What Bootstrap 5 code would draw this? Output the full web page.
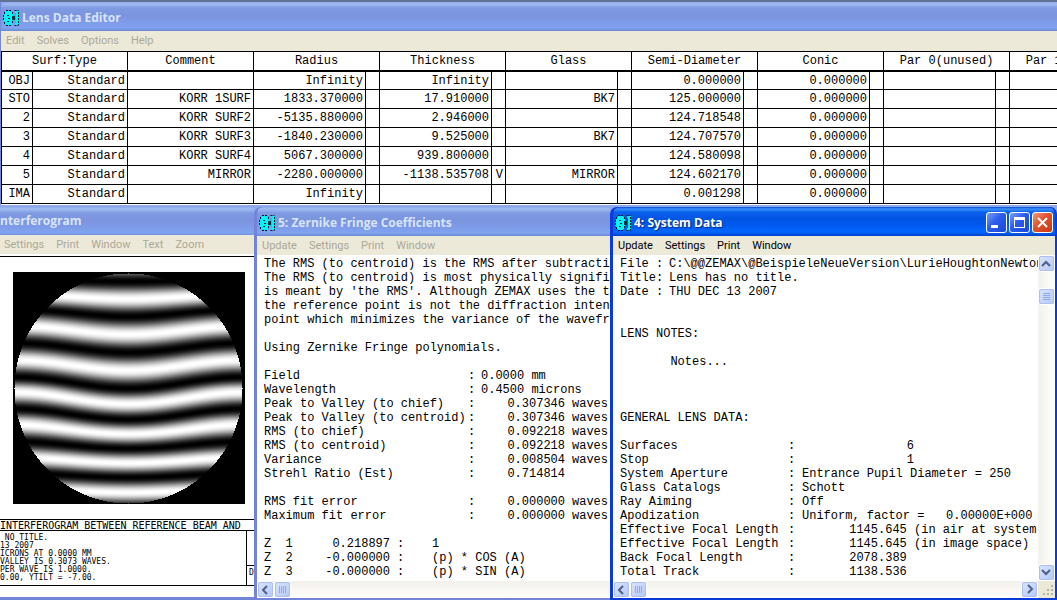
<!DOCTYPE html>
<html lang="en">
<head>
<meta charset="utf-8">
<meta name="viewport" content="width=device-width, initial-scale=1">
<title>Lens Data Editor</title>
<link href="https://cdn.jsdelivr.net/npm/bootstrap@5.3.0/dist/css/bootstrap.min.css" rel="stylesheet">
<style>
  body { background: #8fa9ec; font-family: "Open Sans", sans-serif; color: #000; }
  .desk-edge { height: 2px; background: #5f7396; }
  .frames { display: grid; grid-template-columns: minmax(0, 254fr) minmax(0, 356fr) minmax(0, 447fr); padding-top: 2px; }

  .titlebar { height: 29px; padding: 2px 4px 0 5px; gap: 3px; border-radius: 7px 7px 0 0; color: #d8e4f8;
    background: linear-gradient(#8ea9e8 0, #a2bcf2 2px, #7f9be2 6px, #7b94de 13px, #7e99e6 19px, #80a4f0 26px, #6d87d0 29px); }
  .titlebar h1, .titlebar h2 { margin: 0; font: 700 12px/16px "Open Sans", sans-serif; white-space: nowrap; }
  .active .titlebar { color: #fff; text-shadow: 1px 1px 1px #0a2a80; padding-right: 2px;
    background: linear-gradient(#0646c8 0, #3f93ff 2px, #0a62ec 5px, #0054e2 12px, #0059ee 18px, #0468ff 25px, #0040c8 29px); }
  .menu { background: #ece9d8; height: 20px; gap: 12px; padding-left: 5px; }
  .menu button { border: 0; padding: 0; background: none; color: #aca899; font: 11px/18px Roboto, sans-serif; }
  .active .menu button { color: #000; }
  .frames .menu { height: 19px; }

  .win { min-height: 0; background: #fff; }
  .main-win .titlebar { border-radius: 7px 0 0 0; padding-left: 2px; }
  .main-win { border-left: 1px solid #7488d8; }
  .pane-left { border-bottom: 3px solid #7384d8; }
  .pane-left .titlebar { border-radius: 0; padding-left: 0; height: 28px; padding-top: 0; }
  .pane-left .menu { padding-left: 4px; }
  .pane-mid { border: solid #7384d8; border-width: 0 0 2px 3px; border-radius: 7px 0 0 0; background: #7384d8; }
  .pane-mid .titlebar { border-radius: 6px 0 0 0; padding-left: 2px; }
  .active { border: solid #0a3ad8; border-width: 0 2px 2px 3px; border-radius: 7px 7px 0 0; background: #0a3ad8; }
  .active .titlebar { padding-left: 2px; }

  .lens { width: max-content; border-collapse: separate; border-spacing: 0; border-left: 1px solid #000; border-top: 1px solid #000;
    table-layout: fixed; font: 12px/16px "Liberation Mono", monospace; background: #fff; }
  .lens th, .lens td { padding: 0 2px; border-right: 1px solid #000; border-bottom: 1px solid #000; height: 19px; text-align: right; font-weight: 400; white-space: pre; }
  .lens thead th { text-align: center; border-bottom-width: 2px; height: 20px; }
  .lens tbody tr:first-child > * { height: 18px; }
  .sheet { border-bottom: 1px solid #fff; }

  .report { background: #fff; min-width: 0; padding: 2px 0 0 7px; font: 12px/14px "Liberation Mono", monospace; color: #000; overflow: hidden; }
  .report pre { margin: 0; font: inherit; overflow: visible; }
  .facts { table-layout: fixed; width: 100%; border-collapse: collapse; }
  .facts th, .facts td { padding: 0; height: 14px; font-weight: 400; white-space: pre; text-align: left; }
  .facts .num { text-align: right; }
  .facts .unit { padding-left: 7px; }

  .cap { width: 21px; height: 21px; padding: 0; border: 1px solid #fff; border-radius: 3px; background: linear-gradient(135deg, #7a9df8, #2a5cec 45%, #1a48d8); }
  .cap.shut { background: linear-gradient(135deg, #f09a80, #e0502c 45%, #c83c14); }
  .caps { gap: 2px; }
  .cap svg, .sb svg { display: block; }

  .track-h { height: 17px; background: linear-gradient(#f2f1ec, #fefefb); }
  .track-v { width: 17px; background: linear-gradient(90deg, #f2f1ec, #fefefb); }
  .sb { width: 17px; height: 17px; padding: 0; border: 1px solid #fff; outline: 1px solid #aebfec; outline-offset: -2px; border-radius: 3px; background: linear-gradient(135deg, #d9e4ff, #b4c8f8); }
  .grip { width: 17px; height: 17px; background: #ece9d8; }

  .plot { border-top: 1px solid #000; margin-top: 2px; padding: 15px 8px 15px 13px; }
  .plot canvas { display: block; width: 232px; height: 232px; }
  .legend-title { border: solid #000; border-width: 1px 0; height: 12px; font: 10px/11px "DejaVu Sans Mono", monospace; white-space: pre; overflow: hidden; }
  .legend-body { border-bottom: 1px solid #000; height: 55px; font: 8px/8px "DejaVu Sans Mono", monospace; }
  .legend-body pre { margin: 0; padding-top: 3px; font: inherit; overflow: hidden; }
  .legend-side { width: 8px; border-left: 1px solid #000; padding-top: 34px; overflow: hidden; }
  .legend-side div { border-top: 1px solid #000; padding: 3px 0 0 2px; }
</style>
</head>
<body class="vh-100 overflow-hidden d-flex flex-column">
<svg width="0" height="0" class="position-absolute" aria-hidden="true">
  <symbol id="lens-icon" viewBox="0 0 16 16">
    <path d="M3 1h5v1h1v2h1v8h-1v2h-1v1h-5v-1h-2v-3h-1v-6h1v-3h2z" fill="#00f4f4"/>
    <path d="M12 1h4v14h-4v-2h1v-10h-1z" fill="#00f4f4"/>
    <path d="M3 .5h5M1.500 2v2M.5 5v6M1.500 12v2M3 15.500h5M9.500 2v3M9.500 11v3M11.500 .5h4M11.500 15.500h4M15.500 2v13" fill="none" stroke="#001c30" stroke-dasharray="2 1"/>
    <path d="M4 5h2v1h-2zM5 8h2v1h-2zM4 11h2v1h-2zM9 6h3v4h-3z" fill="#003040"/>
  </symbol>
</svg>

<div class="desk-edge flex-shrink-0"></div>
<section class="main-win flex-shrink-0 overflow-hidden">
  <header class="titlebar d-flex align-items-center">
    <svg width="16" height="16" aria-hidden="true"><use href="#lens-icon"/></svg>
    <h1>Lens Data Editor</h1>
  </header>
  <nav class="menu d-flex align-items-center" aria-label="Editor menu">
    <button type="button">Edit</button><button type="button">Solves</button><button type="button">Options</button><button type="button">Help</button>
  </nav>
  <div class="sheet">
    <table class="lens" id="lens">
      <colgroup id="lens-cols"></colgroup>
      <thead><tr id="lens-head"></tr></thead>
      <tbody id="lens-body"></tbody>
    </table>
  </div>
</section>

<main class="frames flex-fill overflow-hidden">
  <section class="win pane-left d-flex flex-column overflow-hidden">
    <header class="titlebar d-flex align-items-center flex-shrink-0"><h2>nterferogram</h2></header>
    <nav class="menu d-flex align-items-center flex-shrink-0" aria-label="Interferogram menu">
      <button type="button">Settings</button><button type="button">Print</button><button type="button">Window</button><button type="button">Text</button><button type="button">Zoom</button>
    </nav>
    <div class="plot"><canvas id="fringes" width="232" height="232" role="img" aria-label="Interferogram fringes"></canvas></div>
    <div class="legend-title">INTERFEROGRAM BETWEEN REFERENCE BEAM AND</div>
    <div class="legend-body d-flex">
      <pre class="flex-fill"> NO TITLE.
13 2007
ICRONS AT 0.0000 MM
VALLEY IS 0.3073 WAVES.
PER WAVE IS 1.0000.
0.00, YTILT = -7.00.</pre>
      <div class="legend-side flex-shrink-0"><div>D</div></div>
    </div>
  </section>

  <section class="win pane-mid d-flex flex-column overflow-hidden">
    <header class="titlebar d-flex align-items-center flex-shrink-0">
      <svg width="16" height="16" aria-hidden="true"><use href="#lens-icon"/></svg>
      <h2>5: Zernike Fringe Coefficients</h2>
    </header>
    <nav class="menu d-flex align-items-center flex-shrink-0" aria-label="Zernike menu">
      <button type="button">Update</button><button type="button">Settings</button><button type="button">Print</button><button type="button">Window</button>
    </nav>
    <div class="report flex-fill">
      <pre>The RMS (to centroid) is the RMS after subtracting
The RMS (to centroid) is most physically significa
is meant by 'the RMS'. Although ZEMAX uses the ter
the reference point is not the diffraction intensi
point which minimizes the variance of the wavefron

Using Zernike Fringe polynomials.

</pre>
      <table class="facts">
        <colgroup><col style="width:204px"><col style="width:13px"><col style="width:84px"><col></colgroup>
        <tr><th>Field</th><td>:</td><td colspan="2">0.0000 mm</td></tr>
        <tr><th>Wavelength</th><td>:</td><td colspan="2">0.4500 microns</td></tr>
        <tr><th>Peak to Valley (to chief)</th><td>:</td><td class="num">0.307346</td><td class="unit">waves</td></tr>
        <tr><th>Peak to Valley (to centroid)</th><td>:</td><td class="num">0.307346</td><td class="unit">waves</td></tr>
        <tr><th>RMS (to chief)</th><td>:</td><td class="num">0.092218</td><td class="unit">waves</td></tr>
        <tr><th>RMS (to centroid)</th><td>:</td><td class="num">0.092218</td><td class="unit">waves</td></tr>
        <tr><th>Variance</th><td>:</td><td class="num">0.008504</td><td class="unit">waves</td></tr>
        <tr><th>Strehl Ratio (Est)</th><td>:</td><td class="num">0.714814</td><td></td></tr>
        <tr><td colspan="4"></td></tr>
        <tr><th>RMS fit error</th><td>:</td><td class="num">0.000000</td><td class="unit">waves</td></tr>
        <tr><th>Maximum fit error</th><td>:</td><td class="num">0.000000</td><td class="unit">waves</td></tr>
        <tr><td colspan="4"></td></tr>
      </table>
      <table class="facts">
        <colgroup><col style="width:28px"><col style="width:98px"><col style="width:42px"><col></colgroup>
        <tr><th>Z  1</th><td class="num">0.218897</td><td class="unit">:</td><td>1</td></tr>
        <tr><th>Z  2</th><td class="num">-0.000000</td><td class="unit">:</td><td>(p) * COS (A)</td></tr>
        <tr><th>Z  3</th><td class="num">-0.000000</td><td class="unit">:</td><td>(p) * SIN (A)</td></tr>
      </table>
    </div>
    <div class="track-h d-flex flex-shrink-0">
      <button class="sb" type="button" aria-label="Scroll left"><svg width="15" height="15" viewBox="0 0 15 15"><path d="M9 4l-4 4 4 4" fill="none" stroke="#4d6185" stroke-width="2"/></svg></button>
      <button class="sb" type="button" aria-label="Scroll thumb"><svg width="15" height="15" viewBox="0 0 15 15"><path d="M4.500 4v7M6.500 4v7M8.500 4v7M10.500 4v7" stroke="#8faaf0"/></svg></button>
    </div>
  </section>

  <section class="win active d-flex flex-column overflow-hidden">
    <header class="titlebar d-flex align-items-center flex-shrink-0">
      <svg width="16" height="16" aria-hidden="true"><use href="#lens-icon"/></svg>
      <h2 class="me-auto">4: System Data</h2>
      <div class="caps d-flex">
        <button class="cap" type="button" aria-label="Minimize"><svg width="19" height="19" viewBox="0 0 19 19"><path d="M4 12h7v3h-7z" fill="#fff"/></svg></button>
        <button class="cap" type="button" aria-label="Maximize"><svg width="19" height="19" viewBox="0 0 19 19"><path d="M4 4h11v11h-11zM5 7v7h9v-7z" fill="#fff" fill-rule="evenodd"/></svg></button>
        <button class="cap shut" type="button" aria-label="Close"><svg width="19" height="19" viewBox="0 0 19 19"><path d="M5 5l9 9M14 5l-9 9" stroke="#fff" stroke-width="2"/></svg></button>
      </div>
    </header>
    <nav class="menu d-flex align-items-center flex-shrink-0" aria-label="System data menu">
      <button type="button">Update</button><button type="button">Settings</button><button type="button">Print</button><button type="button">Window</button>
    </nav>
    <div class="d-flex flex-fill overflow-hidden">
      <div class="report flex-fill">
        <table class="facts">
          <colgroup><col style="width:49px"><col></colgroup>
          <tr><th>File :</th><td>C:\@@ZEMAX\@BeispieleNeueVersion\LurieHoughtonNewtonD</td></tr>
          <tr><th>Title:</th><td>Lens has no title.</td></tr>
          <tr><th>Date :</th><td>THU DEC 13 2007</td></tr>
        </table>
        <pre>


LENS NOTES:

       Notes...



GENERAL LENS DATA:

</pre>
        <table class="facts">
          <colgroup><col style="width:168px"><col style="width:14px"><col style="width:112px"><col></colgroup>
          <tr><th>Surfaces</th><td>:</td><td class="num">6</td><td></td></tr>
          <tr><th>Stop</th><td>:</td><td class="num">1</td><td></td></tr>
          <tr><th>System Aperture</th><td>:</td><td colspan="2">Entrance Pupil Diameter = 250</td></tr>
          <tr><th>Glass Catalogs</th><td>:</td><td colspan="2">Schott</td></tr>
          <tr><th>Ray Aiming</th><td>:</td><td colspan="2">Off</td></tr>
          <tr><th>Apodization</th><td>:</td><td colspan="2">Uniform, factor =   0.00000E+000</td></tr>
          <tr><th>Effective Focal Length</th><td>:</td><td class="num">1145.645 </td><td>(in air at system</td></tr>
          <tr><th>Effective Focal Length</th><td>:</td><td class="num">1145.645 </td><td>(in image space)</td></tr>
          <tr><th>Back Focal Length</th><td>:</td><td class="num">2078.389 </td><td></td></tr>
          <tr><th>Total Track</th><td>:</td><td class="num">1138.536 </td><td></td></tr>
        </table>
      </div>
      <div class="track-v d-flex flex-column flex-shrink-0">
        <button class="sb" type="button" aria-label="Scroll up"><svg width="15" height="15" viewBox="0 0 15 15"><path d="M3 10l4-4 4 4" fill="none" stroke="#4d6185" stroke-width="2"/></svg></button>
        <button class="sb mt-3" type="button" aria-label="Scroll thumb"><svg width="15" height="15" viewBox="0 0 15 15"><path d="M4 4.500h7M4 6.500h7M4 8.500h7M4 10.500h7" stroke="#8faaf0"/></svg></button>
        <button class="sb mt-auto" type="button" aria-label="Scroll down"><svg width="15" height="15" viewBox="0 0 15 15"><path d="M3 5l4 4 4-4" fill="none" stroke="#4d6185" stroke-width="2"/></svg></button>
      </div>
    </div>
    <div class="track-h d-flex flex-shrink-0">
      <button class="sb" type="button" aria-label="Scroll left"><svg width="15" height="15" viewBox="0 0 15 15"><path d="M9 4l-4 4 4 4" fill="none" stroke="#4d6185" stroke-width="2"/></svg></button>
      <button class="sb me-auto" type="button" aria-label="Scroll thumb"><svg width="15" height="15" viewBox="0 0 15 15"><path d="M4.500 4v7M6.500 4v7M8.500 4v7M10.500 4v7" stroke="#8faaf0"/></svg></button>
      <button class="sb" type="button" aria-label="Scroll right"><svg width="15" height="15" viewBox="0 0 15 15"><path d="M6 3l4 4-4 4" fill="none" stroke="#4d6185" stroke-width="2"/></svg></button>
      <div class="grip"><svg class="d-block" width="17" height="17"><path d="M13 4h2v2h-2zM9 8h2v2h-2zM13 8h2v2h-2zM5 12h2v2h-2zM9 12h2v2h-2zM13 12h2v2h-2z" fill="#b8b4a2"/></svg></div>
    </div>
  </section>
</main>

<script src="https://cdn.jsdelivr.net/npm/bootstrap@5.3.0/dist/js/bootstrap.bundle.min.js"></script>
<script>
  // Lens prescription: surface, type, comment, then value and solve flag for each parameter.
  const heads = ['Radius', 'Thickness', 'Glass', 'Semi-Diameter', 'Conic', 'Par 0(unused)', 'Par 1(unused)'];
  const rows = [
    ['OBJ', '', 'Infinity', 'Infinity', '', '0.000000'],
    ['STO', 'KORR 1SURF', '1833.370000', '17.910000', 'BK7', '125.000000'],
    ['2', 'KORR SURF2', '-5135.880000', '2.946000', '', '124.718548'],
    ['3', 'KORR SURF3', '-1840.230000', '9.525000', 'BK7', '124.707570'],
    ['4', 'KORR SURF4', '5067.300000', '939.800000', '', '124.580098'],
    ['5', 'MIRROR', '-2280.000000', '-1138.535708', 'MIRROR', '124.602170'],
    ['IMA', '', 'Infinity', '', '', '0.001298']
  ];
  const widths = [31, 95, 126].concat(heads.flatMap(() => [112, 14]));
  document.getElementById('lens').style.width = widths.reduce((a, b) => a + b, 1) + 'px';
  document.getElementById('lens-cols').innerHTML = widths.map(w => `<col style="width:${w}px">`).join('');
  document.getElementById('lens-head').innerHTML =
    '<th colspan="2">Surf:Type</th><th>Comment</th>' + heads.map(h => `<th colspan="2">${h}</th>`).join('');
  document.getElementById('lens-body').innerHTML = rows.map(([surf, note, ...vals]) => {
    const cells = [...vals, '0.000000', '', ''].map(v =>
      `<td>${v}</td><td>${v === '-1138.535708' ? 'V' : ''}</td>`).join('');
    return `<tr><th scope="row">${surf}</th><td>Standard</td><td>${note}</td>${cells}</tr>`;
  }).join('');

  // Fringe pattern: dark fringe centres on the axis, bowed upwards towards the rim.
  const dark = [-27, 9, 44, 80, 116, 147, 176, 205, 235, 265];
  const bow = [0, 2, 8, 10, 12, 10, 6, 4, 3, 3];
  const cv = document.getElementById('fringes'), cx = cv.getContext('2d');
  const img = cx.createImageData(232, 232);
  const at = (list, y) => {
    let k = 0;
    while (k < dark.length - 2 && y > dark[k + 1]) k++;
    const t = (y - dark[k]) / (dark[k + 1] - dark[k]);
    return [list[k] + (list[k + 1] - list[k]) * t, k + t];
  };
  for (let y = 0; y < 232; y++) for (let x = 0; x < 232; x++) {
    const u = (x - 115) / 114, v = (y - 116) / 115, p = (y * 232 + x) * 4;
    let g = 0;
    if (u * u + v * v <= 1) {
      const w = (1 - Math.cos(Math.PI * u)) / 2;
      const n = at(bow, y + at(bow, y)[0] * w)[1];
      g = 255 * Math.sin(Math.PI * n) ** 2;
    }
    img.data[p] = img.data[p + 1] = img.data[p + 2] = g;
    img.data[p + 3] = 255;
  }
  cx.putImageData(img, 0, 0);
</script>
</body>
</html>
